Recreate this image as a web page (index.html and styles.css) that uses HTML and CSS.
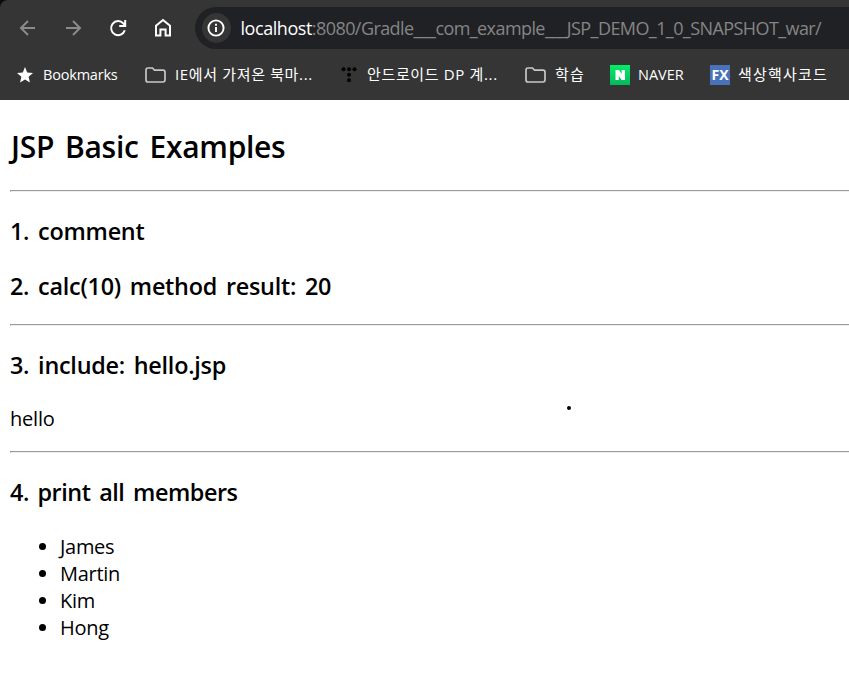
FILE: index.html
```html
<!DOCTYPE html>
<html lang="ko">
<head>
<meta charset="utf-8">
<title>JSP Basic Examples</title>
<link rel="stylesheet" href="styles.css">
</head>
<body>
<header class="browser">
  <div class="toolbar">
    <svg class="nav dim" viewBox="0 0 20 20"><path d="M17 10H3.5M10 3L3 10l7 7"/></svg>
    <svg class="nav dim" viewBox="0 0 20 20"><path d="M3 10h13.5M10 3l7 7-7 7"/></svg>
    <svg class="nav" viewBox="0 0 20 20"><path d="M16.8 12.2A7 7 0 1 1 15.3 5.4L17 7.2M17.2 2v6h-6"/></svg>
    <svg class="nav" viewBox="0 0 20 20"><path d="M3 17.6V7.7L10 2l7 5.7v9.9h-4.4v-6.2H7.4v6.2z"/></svg>
    <div class="address">
      <span class="info"><svg viewBox="0 0 20 20"><circle cx="10" cy="10" r="7.6"/><path d="M10 9v5M10 5.8v2"/></svg></span>
      <span class="url"><b>localhost</b><span class="path">:8080/Gradle___com_example___JSP_DEMO_1_0_SNAPSHOT_war/</span></span>
    </div>
  </div>
  <nav class="bookmarks">
    <a class="bm bm-star"><svg class="star" viewBox="0 0 16 16"><path d="M8 0l2.2 5.4 5.8.5-4.4 3.8 1.3 5.8L8 12.4l-4.9 3.1 1.3-5.8L0 5.9l5.8-.5z"/></svg><span>Bookmarks</span></a>
    <a class="bm bm-ie"><svg class="folder" viewBox="0 0 21 16"><path d="M1 3.2Q1 1 3 1h4.5l2 2.2H18q2 0 2 2v7.6Q20 15 18 15H3q-2 0-2-2z"/></svg><span class="ko">IE에서 가져온 북마...</span></a>
    <a class="bm bm-android"><svg class="dots" viewBox="0 0 16 16"><circle cx="2.5" cy="2.3" r="2"/><circle cx="8" cy="2.3" r="2"/><circle cx="13.5" cy="2.3" r="2"/><circle cx="8" cy="7.8" r="2"/><circle cx="8" cy="13.3" r="2"/></svg><span class="ko">안드로이드 DP 계...</span></a>
    <a class="bm bm-study"><svg class="folder" viewBox="0 0 21 16"><path d="M1 3.2Q1 1 3 1h4.5l2 2.2H18q2 0 2 2v7.6Q20 15 18 15H3q-2 0-2-2z"/></svg><span class="ko wide">학습</span></a>
    <a class="bm bm-naver"><svg class="naver" viewBox="0 0 20 20"><path d="M5.5 5H9l2.7 4V5H15v10h-3.4l-2.8-4v4H5.5z"/></svg><span>NAVER</span></a>
    <a class="bm bm-color"><i class="fx">FX</i><span class="ko wide">색상핵사코드</span></a>
  </nav>
</header>
<main>
  <h2>JSP Basic Examples</h2>
  <hr>
  <h3 class="h-comment">1. comment</h3>
  <h3 class="h-calc">2. calc(10) method result: 20</h3>
  <hr>
  <h3 class="h-include">3. include: hello.jsp</h3>
  <p>hello</p>
  <hr>
  <h3 class="h-members">4. print all members</h3>
  <ul>
    <li>James</li>
    <li>Martin</li>
    <li>Kim</li>
    <li>Hong</li>
  </ul>
</main>
<div class="cursor-dot"></div>
</body>
</html>
```
FILE: styles.css
```css
* { box-sizing: border-box; }
body {
  margin: 0;
  background: #fff;
  color: #000;
  font-family: "Open Sans", "Noto Sans CJK KR", sans-serif;
  overflow: hidden;
}
.browser {
  height: 100px;
  background: #353535;
  border-top-left-radius: 8px;
  box-shadow: -8px -8px 0 #0b0b0b;
}
.toolbar {
  display: flex;
  align-items: center;
  height: 56px;
  padding-left: 17.5px;
}
.nav {
  flex: none;
  width: 20px;
  height: 20px;
  margin-right: 25px;
  fill: none;
  stroke: #fff;
  stroke-width: 2;
}
.nav.dim { stroke: #8b8b8b; }
.address {
  flex: 1;
  display: flex;
  align-items: center;
  height: 42px;
  margin-left: -3px;
  padding-left: 7px;
  background: #202124;
  border-radius: 21px 0 0 21px;
}
.info {
  flex: none;
  display: flex;
  align-items: center;
  justify-content: center;
  width: 29px;
  height: 30px;
  border-radius: 50%;
  background: #353535;
}
.info svg { width: 20px; height: 20px; fill: none; stroke: #fff; stroke-width: 1.9; }
.url { margin-left: 10px; font-size: 18px; white-space: nowrap; color: #858585; }
.url b { font-weight: 400; color: #fff; letter-spacing: -0.45px; }
.path { letter-spacing: -0.58px; }
.bookmarks {
  display: flex;
  align-items: center;
  height: 37px;
  padding-left: 17px;
  color: #fff;
  font-size: 14.5px;
}
.bm { flex: none; display: flex; align-items: center; white-space: nowrap; line-height: 20px; }
.bm span { display: block; }
.bm-star { width: 128px; }
.bm-star span { letter-spacing: -0.2px; }
.bm-ie { width: 196px; }
.bm-android { width: 184px; }
.bm-study { width: 85px; }
.bm-naver { width: 100px; }
.ko { font-size: 15px; letter-spacing: 0.65px; position: relative; top: -1px; }
.ko.wide { letter-spacing: 1.2px; }
.star { width: 16px; height: 16px; margin-right: 10px; fill: #fff; }
.folder { width: 21px; height: 16px; margin-right: 9px; fill: none; stroke: #c7c7c7; stroke-width: 1.7; }
.dots { width: 16px; height: 16px; margin-right: 10px; fill: #000; }
.naver { width: 20px; height: 20px; margin-right: 8px; background: linear-gradient(#03ee68, #05b85d); fill: #fff; }
.fx {
  width: 20px;
  height: 20px;
  margin-right: 8px;
  background: #4a72b8;
  font: 700 14px/20px "Open Sans", sans-serif;
  text-align: center;
}
main { padding: 27px 0 0 10px; font-size: 20px; line-height: 27px; }
h2 { margin: 0; font-size: 30px; line-height: 40px; font-weight: 600; letter-spacing: -0.3px; word-spacing: 3.5px; text-indent: 1px; }
h3 { margin: 0; font-size: 23.4px; line-height: 31px; font-weight: 600; letter-spacing: -0.25px; word-spacing: 3px; }
.h-members { letter-spacing: -0.45px; }
hr { height: 2px; margin: 23px 0 24px; border: 1px solid #9a9a9a; border-right: 0; border-bottom-color: #eee; }
.h-calc { margin-top: 24px; }
.h-calc + hr { margin-top: 22px; }
p { margin: 24px 0 0; letter-spacing: -0.2px; }
p + hr { margin-top: 19px; }
ul { margin: 25px 0 0; padding-left: 50px; letter-spacing: -0.3px; }
.cursor-dot {
  position: absolute;
  left: 567px;
  top: 406px;
  width: 4px;
  height: 4px;
  border-radius: 50%;
  background: #000;
}
```
